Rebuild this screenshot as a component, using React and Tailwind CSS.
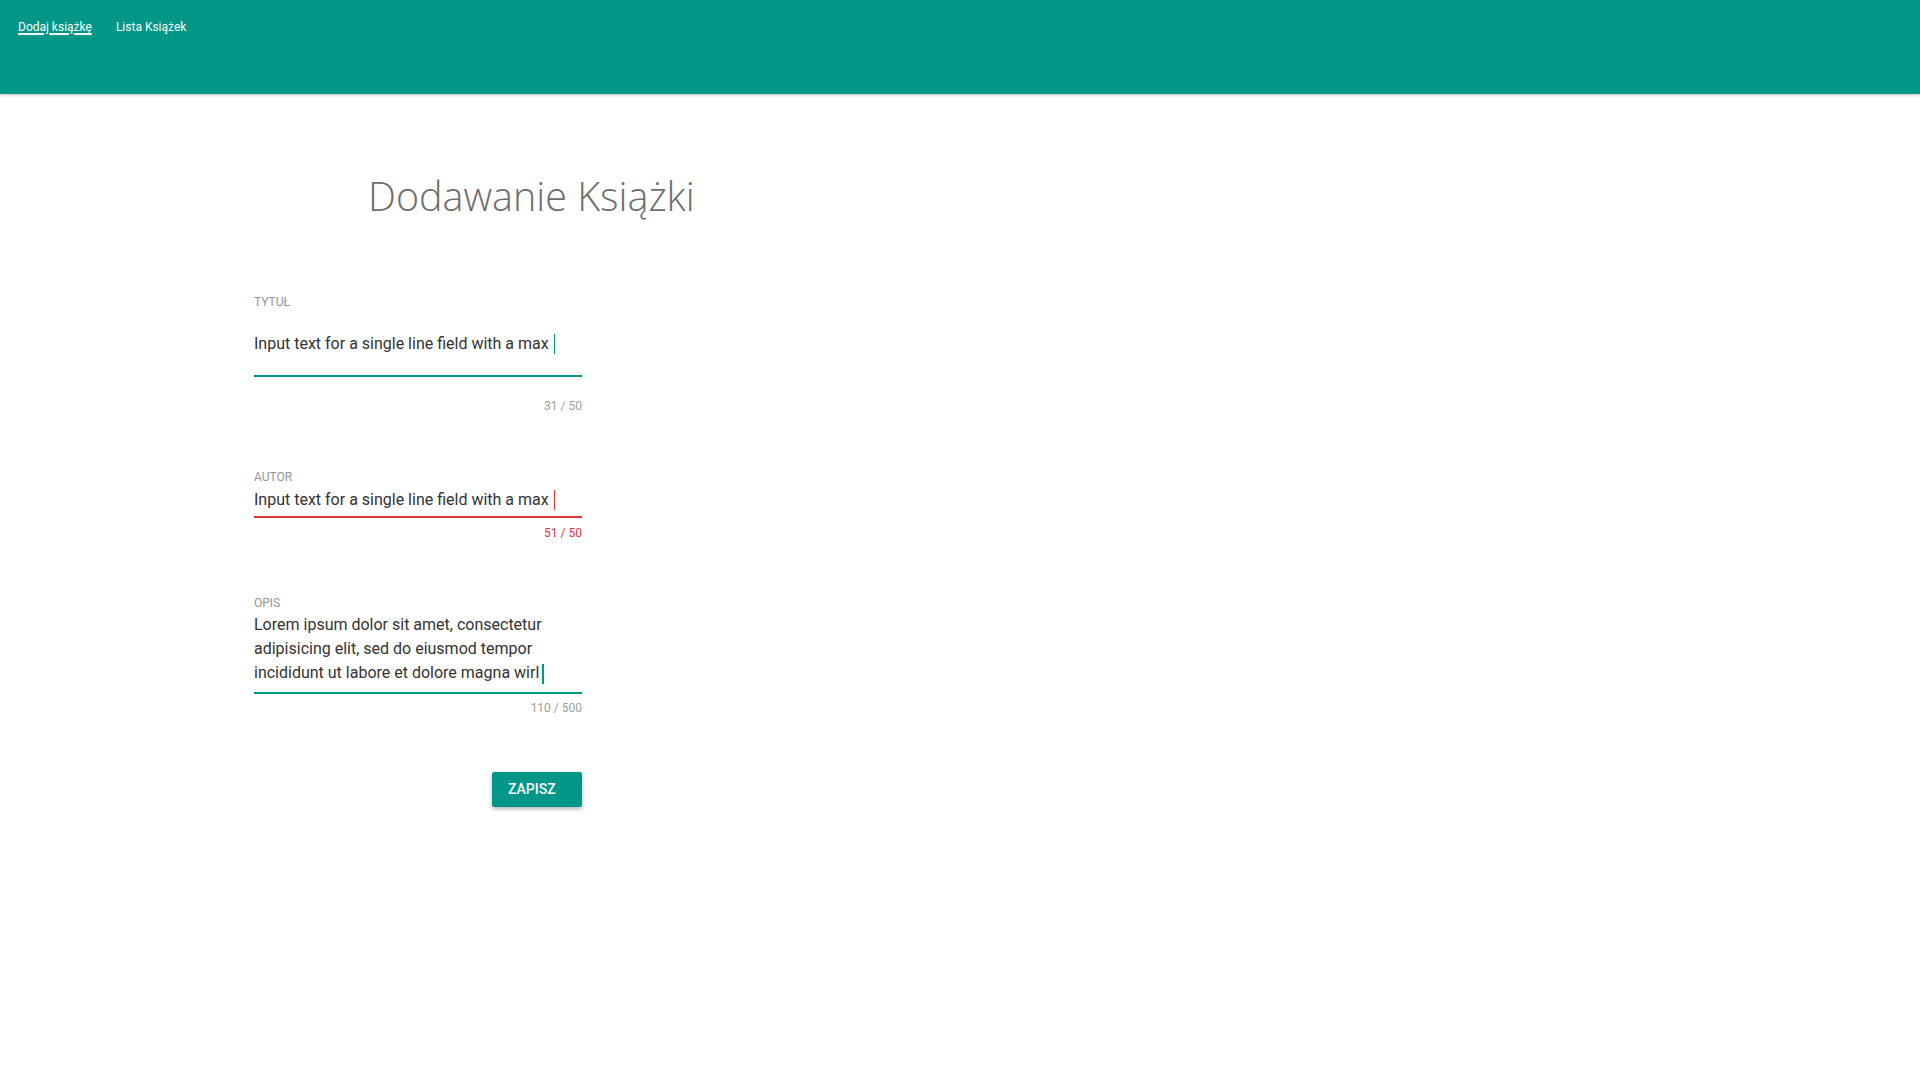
export default function App() {
  const roboto = { fontFamily: "Roboto, 'Liberation Sans', sans-serif" };

  return (
    <div className="min-h-screen bg-white" style={roboto}>
      <header className="h-[94px] bg-[#009688] shadow-[0_1px_3px_rgba(0,0,0,0.25)]">
        <nav className="flex gap-[22px] pl-[18px] pt-[19px] text-[12px] leading-[16px] text-white">
          <a className="pr-[2px] underline decoration-2 underline-offset-2">Dodaj książkę</a>
          <a>Lista Książek</a>
        </nav>
      </header>

      <main className="pl-[254px]">
        <h1
          className="mt-[78px] pl-[114px] text-[39.5px] leading-[48px] font-light text-[#6e6e6e]"
          style={{ fontFamily: "'Open Sans', sans-serif" }}
        >
          Dodawanie Książki
        </h1>

        <div className="w-[328px]">
          {/* tytul */}
          <div className="mt-[74px] text-[12px] leading-[16px] text-[#959595]">TYTUŁ</div>
          <div className="mt-[22px] flex items-center text-[16px] leading-[24px] text-[#333333]">
            Input text for a single line field with a max
            <span className="ml-[5px] inline-block h-[20px] w-[1.5px] bg-[#009688]" />
          </div>
          <div className="mt-[19px] h-[2px] bg-[#009688]" />
          <div className="mt-[21px] text-right text-[12px] leading-[16px] text-[#9e9e9e]">31 / 50</div>

          {/* autor */}
          <div className="mt-[55px] text-[12px] leading-[16px] text-[#959595]">AUTOR</div>
          <div className="mt-[3px] flex items-center text-[16px] leading-[24px] text-[#333333]">
            Input text for a single line field with a max
            <span className="ml-[5px] inline-block h-[20px] w-[1.5px] bg-[#e53935]" />
          </div>
          <div className="mt-[4px] h-[2px] bg-[#e53935]" />
          <div className="mt-[7px] text-right text-[12px] leading-[16px] text-[#e53935]">51 / 50</div>

          {/* opis */}
          <div className="mt-[54px] text-[12px] leading-[16px] text-[#959595]">OPIS</div>
          <div className="mt-[2px] text-[16px] leading-[24px] text-[#333333]">
            Lorem ipsum dolor sit amet, consectetur
            <br />
            adipisicing elit, sed do eiusmod tempor
            <br />
            incididunt ut labore et dolore magna wirl
            <span className="ml-[3px] inline-block h-[20px] w-[1.5px] bg-[#009688] align-middle" />
          </div>
          <div className="mt-[7px] h-[2px] bg-[#009688]" />
          <div className="mt-[6px] text-right text-[12px] leading-[16px] text-[#9e9e9e]">110 / 500</div>

          <div className="mt-[56px] flex justify-end">
            <button className="flex h-[35px] w-[90px] items-center rounded-[2px] bg-[#009688] pl-4 text-[14px] font-medium text-white shadow-[0_2px_4px_rgba(0,0,0,0.3)]">
              ZAPISZ
            </button>
          </div>
        </div>
      </main>
    </div>
  );
}
